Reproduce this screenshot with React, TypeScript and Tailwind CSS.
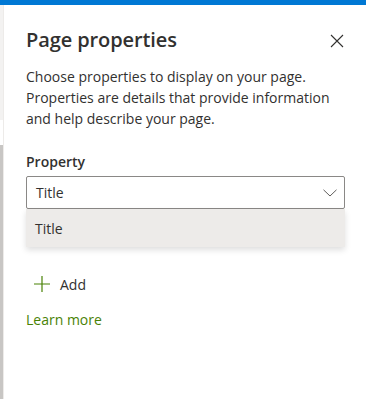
export default function App() {
  return (
    <div
      className="w-[366px] h-[399px] bg-white flex flex-col overflow-hidden text-[#323130]"
      style={{ fontFamily: '"Segoe UI", "Open Sans", "Noto Sans", sans-serif' }}
    >
      <div className="h-[5px] bg-[#0078d4] shrink-0" />
      <div className="flex flex-1 min-h-0">
        <div className="w-[3px] flex flex-col shrink-0">
          <div className="h-[115px] bg-[#f3f2f1]" />
          <div className="h-[25px] bg-white" />
          <div className="flex-1 bg-[#c8c6c4]" />
        </div>
        <div className="flex-1 border-l border-[#edebe9] pl-[22px] pr-[21px]">
          <div className="flex items-center justify-between pt-[21px]">
            <h1 className="text-[20px] font-semibold leading-[28px] tracking-[-0.1px]">Page properties</h1>
            <svg width="14" height="14" viewBox="0 0 14 14" className="mr-[1px] mt-[1px]">
              <path d="M1 1 L13 13 M13 1 L1 13" stroke="#323130" strokeWidth="1.1" fill="none" />
            </svg>
          </div>
          <p className="mt-[12px] text-[14px] leading-[21px]">
            Choose properties to display on your page. Properties are details that provide information and help describe
            your page.
          </p>
          <div className="mt-[23px] text-[14px] font-semibold leading-[20px]">Property</div>
          <div className="mt-[4px] h-[33px] border border-[#8a8886] rounded-[2px] flex items-center justify-between pl-[9px] pr-[7px]">
            <span className="text-[14px]">Title</span>
            <svg width="14" height="8" viewBox="0 0 14 8" className="mt-[1px]">
              <path d="M0.5 0.8 L7 7 L13.5 0.8" stroke="#605e5c" strokeWidth="1" fill="none" />
            </svg>
          </div>
          <div className="h-[38px] bg-[#edebe9] flex items-center pl-[9px] text-[14px] shadow-[0_3px_6px_rgba(0,0,0,0.13)]">
            Title
          </div>
          <div className="mt-[22px] flex items-center gap-[10px] pl-[8px] h-[30px]">
            <svg width="16" height="16" viewBox="0 0 16 16">
              <path d="M8 0 V16 M0 8 H16" stroke="#498205" strokeWidth="1.2" fill="none" />
            </svg>
            <span className="text-[14px]">Add</span>
          </div>
          <div className="mt-[11px] text-[14px] text-[#498205] leading-[20px]">Learn more</div>
        </div>
      </div>
    </div>
  );
}
